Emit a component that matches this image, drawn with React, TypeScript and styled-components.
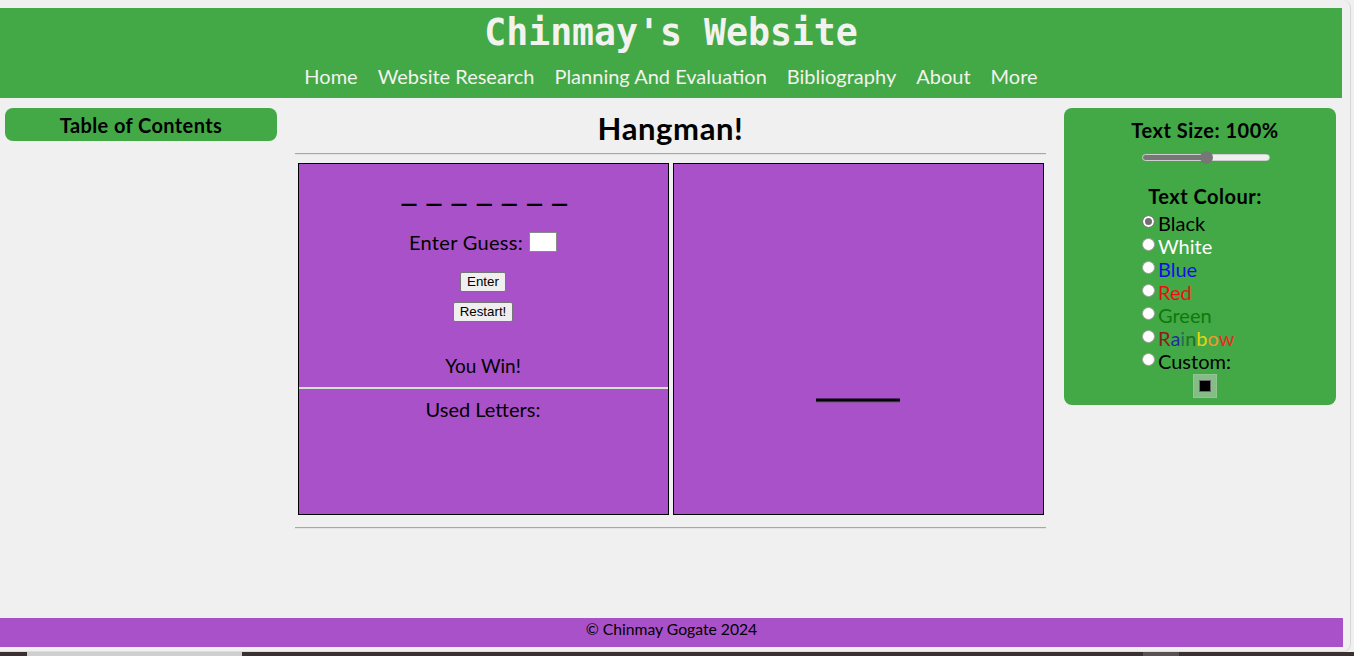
import React from "react";
import styled, { createGlobalStyle } from "styled-components";

const FONT = `"Lato", "Noto Sans", sans-serif`;
const GREEN = "#43a846";
const PURPLE = "#a951c8";
const BG = "#f0f0f0";

const Global = createGlobalStyle`
  html, body { margin: 0; padding: 0; background: ${BG}; }
  body { font-family: ${FONT}; color: #000; overflow: hidden; }
  * { box-sizing: border-box; }
`;

const Screen = styled.div`
  width: 1354px;
  height: 656px;
  display: flex;
  flex-direction: column;
  background: ${BG};
`;

const Frame = styled.div`
  flex: 1;
  width: 1351px;
  display: flex;
  flex-direction: column;
  border-right: 1px solid #d6d6d6;
  border-bottom: 1px solid #dcdcdc;
  border-top-right-radius: 8px;
  border-bottom-right-radius: 8px;
  padding-top: 8px;
  padding-bottom: 4px;
`;

const Page = styled.div`
  width: 1343px;
  flex: 1;
  display: flex;
  flex-direction: column;
`;

const Header = styled.header`
  width: 1342px;
  height: 90px;
  background: ${GREEN};
  display: flex;
  flex-direction: column;
  align-items: center;
  padding-top: 3px;
`;

const SiteTitle = styled.h1`
  margin: 0;
  font-family: "DejaVu Sans Mono", "Liberation Mono", monospace;
  font-weight: bold;
  font-size: 36.5px;
  line-height: 44px;
  color: #f2f2ee;
`;

const Nav = styled.nav`
  margin-top: 9px;
  display: flex;
  gap: 20px;
  justify-content: center;
`;

const NavLink = styled.a`
  font-size: 20px;
  line-height: 24px;
  color: #f2f2ee;
  text-decoration: none;
`;

const Content = styled.div`
  flex: 1;
  display: grid;
  grid-template-columns: 272px 751px 272px;
  column-gap: 18px;
  align-items: start;
  padding: 10px 0 0 5px;
`;

const TocBox = styled.div`
  height: 33px;
  background: ${GREEN};
  border-radius: 8px;
  display: flex;
  align-items: center;
  justify-content: center;
  font-weight: bold;
  font-size: 20px;
  letter-spacing: 0.4px;
`;

const Main = styled.main`
  display: flex;
  flex-direction: column;
  align-items: stretch;
`;

const PageTitle = styled.h2`
  margin: 2px 0 0;
  text-align: center;
  font-size: 31px;
  letter-spacing: 0.6px;
  line-height: 36px;
  font-weight: bold;
`;

const Rule = styled.hr<{ $top: number }>`
  margin: ${(p) => p.$top}px 0 0;
  border: none;
  border-top: 1px solid #a8a8a8;
  border-bottom: 1px solid #e4e4e4;
  height: 0;
`;

const GameRow = styled.div`
  margin-top: 8px;
  display: flex;
  justify-content: center;
  gap: 4px;
`;

const GameBox = styled.div`
  width: 371px;
  height: 352px;
  background: ${PURPLE};
  border: 1px solid #000;
  display: flex;
  flex-direction: column;
  align-items: center;
`;

const Word = styled.div`
  margin-top: 14px;
  height: 28px;
  font-family: "DejaVu Sans Mono", monospace;
  font-weight: bold;
  font-size: 25px;
  line-height: 28px;
  letter-spacing: -2.5px;
  white-space: pre;
`;

const GuessRow = styled.div`
  margin-top: 24px;
  height: 24px;
  display: flex;
  align-items: center;
  gap: 6px;
  font-size: 20px;
  letter-spacing: 0.3px;
`;

const GuessInput = styled.input`
  width: 28px;
  height: 20px;
  border: 1px solid #8a8a8a;
  background: #fff;
  padding: 0;
  margin: 0;
`;

const Button = styled.button<{ $top: number }>`
  margin-top: ${(p) => p.$top}px;
  height: 20px;
  min-height: 20px;
  flex: none;
  padding: 0 6px;
  font-family: "Liberation Sans", Arial, sans-serif;
  font-size: 13.33px;
  line-height: 18px;
  background: #efefef;
  border: 1px solid #767676;
  border-radius: 2px;
  color: #000;
`;

const Message = styled.div<{ $top: number; $size: number }>`
  margin-top: ${(p) => p.$top}px;
  font-size: ${(p) => p.$size}px;
  line-height: 24px;
`;

const Divider = styled.div`
  margin-top: 9px;
  width: 100%;
  height: 2px;
  background: #cfe3cf;
`;

const Canvas = styled.svg`
  display: block;
  width: 369px;
  height: 350px;
`;

const Sidebar = styled.aside`
  background: ${GREEN};
  border-radius: 8px;
  height: 297px;
  padding: 10px 0 0 10px;
  display: flex;
  flex-direction: column;
  align-items: center;
`;

const SideHeading = styled.div<{ $top: number }>`
  margin-top: ${(p) => p.$top}px;
  font-weight: bold;
  font-size: 20px;
  letter-spacing: 0.5px;
  line-height: 24px;
`;

const Range = styled.input`
  -webkit-appearance: none;
  appearance: none;
  margin: 12px 0 0 2px;
  width: 128px;
  height: 7px;
  border-radius: 4px;
  border: 1px solid #cfcfcf;
  background: linear-gradient(to right, #777 0 48%, #efefef 48% 100%);
  &::-webkit-slider-thumb {
    -webkit-appearance: none;
    appearance: none;
    width: 13px;
    height: 13px;
    border-radius: 50%;
    background: #777;
    border: none;
  }
`;

const OptionList = styled.div`
  margin-top: 4px;
  align-self: flex-start;
  padding-left: 68px;
  display: flex;
  flex-direction: column;
`;

const OptionRow = styled.label`
  height: 23px;
  display: flex;
  align-items: flex-start;
  font-size: 20px;
  line-height: 23px;
`;

const Radio = styled.input`
  appearance: none;
  -webkit-appearance: none;
  width: 13px;
  height: 13px;
  margin: 3px 3px 0 0;
  border-radius: 50%;
  background: #fff;
  border: 1px solid #a0a0a0;
  flex: none;
  &:checked {
    background: #6f6f6f;
    border-color: #808080;
    box-shadow: inset 0 0 0 2px #fff;
  }
`;

const OptionText = styled.span<{ $color: string }>`
  color: ${(p) => p.$color};
`;

const Swatch = styled.div`
  margin-top: 1px;
  width: 24px;
  height: 24px;
  padding: 5px;
  background: #86bc87;
  border: 1px solid #93c593;
`;

const SwatchInner = styled.div`
  width: 100%;
  height: 100%;
  background: #000;
  border: 1px solid #6a6a6a;
`;

const Footer = styled.footer`
  height: 29px;
  background: ${PURPLE};
  text-align: center;
  font-size: 15.7px;
  line-height: 22px;
`;

const Taskbar = styled.div`
  height: 4px;
  display: flex;
  background: #3b3131;
`;

const TaskSeg = styled.div<{ $w: number; $c: string; $ml: number }>`
  width: ${(p) => p.$w}px;
  margin-left: ${(p) => p.$ml}px;
  background: ${(p) => p.$c};
`;

const rainbow = [
  ["R", "#8a1f1f"],
  ["a", "#1f2f9c"],
  ["i", "#1f6f55"],
  ["n", "#1f6f1f"],
  ["b", "#e6d60a"],
  ["o", "#ee9a2f"],
  ["w", "#e42f1f"],
];

const options: { label: React.ReactNode; color: string; checked?: boolean }[] = [
  { label: "Black", color: "#000", checked: true },
  { label: "White", color: "#fff" },
  { label: "Blue", color: "#1010e8" },
  { label: "Red", color: "#ee1010" },
  { label: "Green", color: "#0b7a0b" },
  {
    label: rainbow.map(([ch, c]) => (
      <span key={ch} style={{ color: c }}>
        {ch}
      </span>
    )),
    color: "#000",
  },
  { label: "Custom:", color: "#000" },
];

export default function App() {
  return (
    <Screen>
      <Global />
      <Frame>
        <Page>
          <Header>
            <SiteTitle>Chinmay's Website</SiteTitle>
            <Nav>
              {["Home", "Website Research", "Planning And Evaluation", "Bibliography", "About", "More"].map((n) => (
                <NavLink key={n} href="#">
                  {n}
                </NavLink>
              ))}
            </Nav>
          </Header>
          <Content>
            <TocBox>Table of Contents</TocBox>
            <Main>
              <PageTitle>Hangman!</PageTitle>
              <Rule $top={7} />
              <GameRow>
                <GameBox>
                  <Word>_ _ _ _ _ _ _</Word>
                  <GuessRow>
                    Enter Guess: <GuessInput type="text" />
                  </GuessRow>
                  <Button $top={18}>Enter</Button>
                  <Button $top={10}>Restart!</Button>
                  <Message $top={32} $size={19}>You Win!</Message>
                  <Divider />
                  <Message $top={8} $size={20}>Used Letters:</Message>
                </GameBox>
                <GameBox>
                  <Canvas viewBox="0 0 369 350">
                    <line x1="142" y1="237.5" x2="226" y2="237.5" stroke="#6a5a70" strokeWidth="2" />
                    <line x1="142" y1="236" x2="226" y2="236" stroke="#050008" strokeWidth="3" />
                  </Canvas>
                </GameBox>
              </GameRow>
              <Rule $top={12} />
            </Main>
            <Sidebar>
              <SideHeading $top={0}>Text Size: 100%</SideHeading>
              <Range type="range" min={50} max={150} defaultValue={100} />
              <SideHeading $top={23}>Text Colour:</SideHeading>
              <OptionList>
                {options.map((o, i) => (
                  <OptionRow key={i}>
                    <Radio type="radio" name="colour" defaultChecked={o.checked} />
                    <OptionText $color={o.color}>{o.label}</OptionText>
                  </OptionRow>
                ))}
              </OptionList>
              <Swatch>
                <SwatchInner />
              </Swatch>
            </Sidebar>
          </Content>
          <Footer>© Chinmay Gogate 2024</Footer>
        </Page>
      </Frame>
      <Taskbar>
        <TaskSeg $ml={27} $w={215} $c="#cfcfcf" />
        <TaskSeg $ml={901} $w={36} $c="#5a5252" />
      </Taskbar>
    </Screen>
  );
}
